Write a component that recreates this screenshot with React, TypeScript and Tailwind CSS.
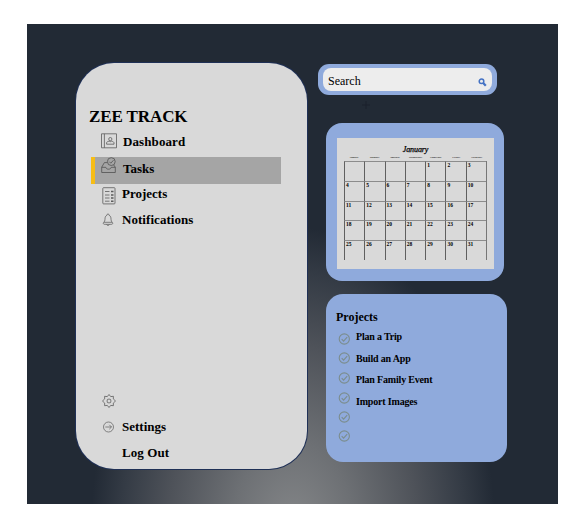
import React from "react";

const ink = "#5c5c5c";

function DashboardIcon() {
  return (
    <svg width="16" height="16" viewBox="0 0 16 16" fill="none" stroke={ink} strokeWidth="0.8">
      <path d="M.5.8h15v14H.5zM3.4.8v14" />
      <circle cx="9.3" cy="6.1" r="1.6" />
      <path d="M5.6 11.2V10c0-1.1 1.1-1.6 2.5-1.8.7.6 1.7.6 2.4 0 1.4.2 2.5.7 2.5 1.8v1.2z" />
    </svg>
  );
}

function TasksIcon() {
  return (
    <svg width="16" height="17" viewBox="0 0 16 17" fill="none" stroke="#505050" strokeWidth="0.8">
      <path d="M6.2 5.6H3.4L.7 10.2v5.3h13.6v-5.3L12.7 8M.7 10.3h4.1c.3 1.3 1.3 1.9 2.7 1.9s2.4-.6 2.7-1.9h4.1" />
      <circle cx="10.3" cy="4.6" r="3.9" />
      <path d="m8.3 4.7 1.5 1.5 2.7-3" />
    </svg>
  );
}

function ListIcon() {
  return (
    <svg width="14" height="18" viewBox="0 0 14 18" fill="none" stroke={ink} strokeWidth="0.8">
      <rect x=".8" y=".7" width="12.2" height="16.2" rx=".8" />
      <path d="M3 4.5h4.5M3 8h4.5M3 11h4.5M3 14.2h4.5" />
      <path strokeWidth="1.6" d="M9 4.5h2.5M9 8h2.5M9 11h2.5M9 14.2h2.5" />
    </svg>
  );
}

function BellIcon() {
  return (
    <svg width="12" height="14" viewBox="0 0 12 14" fill="none" stroke={ink} strokeWidth="0.75">
      <path d="M4.900 2.300c0-1.900 2.200-1.900 2.200 0C8.700 3 9 4.300 9 6.200c0 1.500.4 2.400 1.300 3.100.8.8.4 2-.6 2H2.300c-1 0-1.400-1.200-.6-2C2.600 8.600 3 7.700 3 6.200c0-1.900.3-3.200 1.900-3.900z" />
      <path d="M2 9.300h8M4.700 11.400c.2 1.400 2.400 1.400 2.600 0" />
    </svg>
  );
}

function GearIcon() {
  return (
    <svg width="14" height="14" viewBox="0 0 14 14" fill="none" stroke={ink} strokeWidth="0.8" strokeLinejoin="round">
      <path d="M7 .5 8.700 2.600l2.700-.3-.1 2.600L13.500 7l-2.200 2.100.1 2.600-2.700-.3L7 13.500l-1.700-2.100-2.700.3.100-2.600L.5 7l2.200-2.100-.1-2.600 2.700.3z" />
      <rect x="5.200" y="5.200" width="3.600" height="3.600" rx=".9" />
    </svg>
  );
}

function ArrowIcon() {
  return (
    <svg width="12" height="12" viewBox="0 0 12 12" fill="none" stroke={ink} strokeWidth="0.7">
      <circle cx="5.500" cy="6" r="5" />
      <path d="M2.300 6h6.200M6.300 3.800 8.500 6 6.300 8.200" />
    </svg>
  );
}

function CheckIcon() {
  return (
    <svg width="12" height="12" viewBox="0 0 12 12" fill="none" stroke="#7b8d8e" strokeWidth="1.1">
      <circle cx="6.300" cy="6" r="5.100" />
      <path d="m3.700 6.200 1.900 1.900 3.600-4" />
    </svg>
  );
}

function NavRow({ icon, label, box, text }: { icon?: React.ReactNode; label: string; box: string; text: string }) {
  return (
    <div className={`flex ${box}`}>
      <span className="flex w-[21px] shrink-0 items-center justify-start">{icon}</span>
      <span className={`text-[13px] font-bold ${text}`}>{label}</span>
    </div>
  );
}

const weekdays = ["Sunday", "Monday", "Tuesday", "Wednesday", "Thursday", "Friday", "Saturday"];
const cells = Array.from({ length: 35 }, (_, i) => (i < 4 ? "" : String(i - 3)));

export default function App() {
  return (
    <div className="h-[520px] w-[581px] overflow-hidden bg-white pl-[27px] pt-6 font-['Liberation_Serif','Times_New_Roman',serif] text-black">
      <main className="flex h-[480px] w-[531px] items-start bg-[#222a35] bg-[radial-gradient(ellipse_202px_305px_at_266px_508px,#858789_0%,#6d7074_30%,#4e5259_62%,#343b45_85%,#222a35_100%)] pl-[49px]">
        <aside className="mt-[39px] flex h-[406px] w-[231px] shrink-0 flex-col rounded-[38px] bg-[#d9d9d9] pt-[42px] shadow-[0_0_0_1px_#1f3056]">
          <h1 className="ml-[13px] h-[23px] text-[17px] font-bold leading-[23px] tracking-[-0.1px]">ZEE TRACK</h1>
          <nav className="flex flex-col">
            <NavRow icon={<div className="mb-[4px]"><DashboardIcon /></div>} label="Dashboard" box="ml-[25px] h-[29px]" text="ml-px leading-[28px] tracking-[0.1px]" />
            <div className="ml-[15px] h-[27px] w-[190px] border-l-4 border-[#f6bd16] bg-[#a5a5a5]">
              <NavRow icon={<div className="mb-[10px]"><TasksIcon /></div>} label="Tasks" box="ml-[6px] h-[27px]" text="ml-px leading-[23px]" />
            </div>
            <NavRow icon={<div className="pl-px pt-[2px]"><ListIcon /></div>} label="Projects" box="ml-[25px] h-[21px]" text="leading-[19px]" />
            <NavRow icon={<div className="pl-px"><BellIcon /></div>} label="Notifications" box="ml-[25px] mt-[2px] h-[26px]" text="leading-[26px] tracking-[0.05px]" />
          </nav>
          <div className="mt-[161px] flex flex-col">
            <div className="ml-[26px] h-[20px]"><GearIcon /></div>
            <NavRow icon={<div className="pl-[2px]"><ArrowIcon /></div>} label="Settings" box="ml-[25px] h-[26px]" text="leading-[26px]" />
            <NavRow label="Log Out" box="ml-[25px] h-[26px]" text="leading-[26px] tracking-[0.1px]" />
          </div>
        </aside>

        <div className="ml-[11px] mt-10 flex flex-col">
          <div className="flex h-[31px] w-[179px] items-center rounded-[11px] bg-[#8faadc] px-[5px]">
            <div className="flex h-[23px] w-full items-center justify-between rounded-[8px] bg-[#ededed] pl-[5px] pr-[5px]">
              <span className="pt-[3px] text-[12px] leading-none">Search</span>
              <svg width="9" height="9" viewBox="0 0 9 9" fill="none" stroke="#4472c4" className="mt-[5px]">
                <circle cx="3.500" cy="3.300" r="2.300" strokeWidth="1.500" />
                <path d="m5.200 5 2.600 2.800" strokeWidth="2.200" />
              </svg>
            </div>
          </div>
          <div className="flex h-7 pl-[43px] pt-[5px]">
            <svg width="10" height="10" viewBox="0 0 10 10" stroke="#1a212c" strokeWidth="1">
              <path d="M5 1v8M1 5h8" />
            </svg>
          </div>

          <section className="ml-[8px] h-[158px] w-[178px] rounded-[16px] bg-[#8faadc] pl-[11px] pt-[15px]">
            <div className="h-[131px] w-[157px] bg-[#d9d9d9] pt-[7px]">
              <div className="h-[10px] text-center text-[8px] italic leading-[10px] tracking-[-0.1px] [-webkit-text-stroke:0.25px_#000]">January</div>
              <div className="ml-[7px] grid h-[6px] w-[143px] grid-cols-7 text-center">
                {weekdays.map((d) => (
                  <span key={d} className="text-[2.8px] font-bold leading-[6px] text-[#333333]">{d}</span>
                ))}
              </div>
              <div className="ml-[7px] grid h-[99px] w-[143px] grid-cols-7 grid-rows-5 border-r border-[#777777]">
                {cells.map((day, i) => (
                  <div key={i} className="border-l border-t border-l-[#606060] border-t-[#8c8c8c] pl-px text-[5.500px] font-bold leading-[7px]">
                    {day}
                  </div>
                ))}
              </div>
            </div>
          </section>

          <section className="ml-[8px] mt-[13px] h-[168px] w-[181px] rounded-[17px] bg-[#8faadc] pl-[10px] pt-4">
            <h2 className="h-[14px] text-[12px] font-bold leading-[14px]">Projects</h2>
            <div className="flex">
              <div className="flex w-5 shrink-0 flex-col pl-[2px] pt-[9px]">
                <span className="h-[19px]"><CheckIcon /></span>
                <span className="h-5"><CheckIcon /></span>
                <span className="h-5"><CheckIcon /></span>
                <span className="h-[19px]"><CheckIcon /></span>
                <span className="h-[19px]"><CheckIcon /></span>
                <span className="h-[19px]"><CheckIcon /></span>
              </div>
              <ul className="pt-[2px] text-[10px] font-bold tracking-[-0.18px]">
                <li className="h-[22px] leading-[22px]">Plan a Trip</li>
                <li className="h-[21px] leading-[21px]">Build an App</li>
                <li className="h-[22px] leading-[22px]">Plan Family Event</li>
                <li className="h-[21px] leading-[21px]">Import Images</li>
              </ul>
            </div>
          </section>
        </div>
      </main>
    </div>
  );
}
